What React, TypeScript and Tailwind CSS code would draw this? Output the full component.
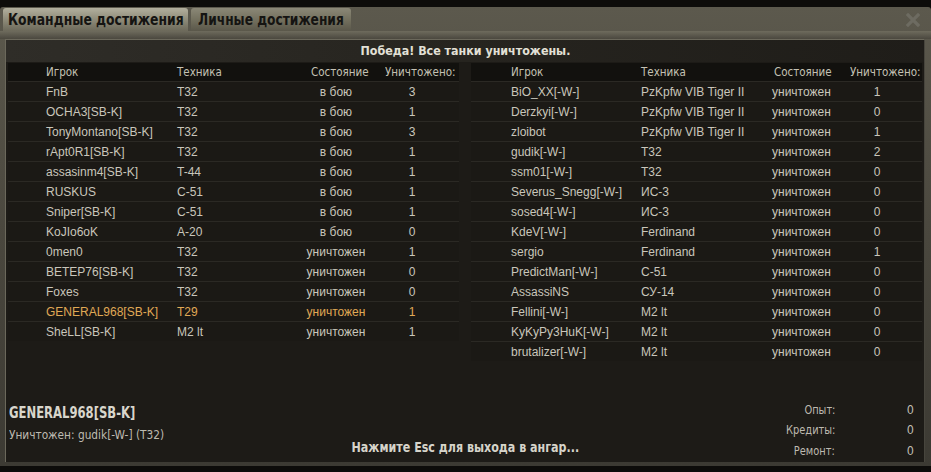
import React from 'react';

type Row = { name: string; tank: string; state: string; kills: string; me?: boolean };

const team: Row[] = [
  { name: 'FnB', tank: 'T32', state: 'в бою', kills: '3' },
  { name: 'OCHA3[SB-K]', tank: 'T32', state: 'в бою', kills: '1' },
  { name: 'TonyMontano[SB-K]', tank: 'T32', state: 'в бою', kills: '3' },
  { name: 'rApt0R1[SB-K]', tank: 'T32', state: 'в бою', kills: '1' },
  { name: 'assasinm4[SB-K]', tank: 'T-44', state: 'в бою', kills: '1' },
  { name: 'RUSKUS', tank: 'C-51', state: 'в бою', kills: '1' },
  { name: 'Sniper[SB-K]', tank: 'C-51', state: 'в бою', kills: '1' },
  { name: 'KoJIo6oK', tank: 'A-20', state: 'в бою', kills: '0' },
  { name: '0men0', tank: 'T32', state: 'уничтожен', kills: '1' },
  { name: 'BETEP76[SB-K]', tank: 'T32', state: 'уничтожен', kills: '0' },
  { name: 'Foxes', tank: 'T32', state: 'уничтожен', kills: '0' },
  { name: 'GENERAL968[SB-K]', tank: 'T29', state: 'уничтожен', kills: '1', me: true },
  { name: 'SheLL[SB-K]', tank: 'M2 lt', state: 'уничтожен', kills: '1' },
];

const enemy: Row[] = [
  { name: 'BiO_XX[-W-]', tank: 'PzKpfw VIB Tiger II', state: 'уничтожен', kills: '1' },
  { name: 'Derzkyi[-W-]', tank: 'PzKpfw VIB Tiger II', state: 'уничтожен', kills: '0' },
  { name: 'zloibot', tank: 'PzKpfw VIB Tiger II', state: 'уничтожен', kills: '1' },
  { name: 'gudik[-W-]', tank: 'T32', state: 'уничтожен', kills: '2' },
  { name: 'ssm01[-W-]', tank: 'T32', state: 'уничтожен', kills: '0' },
  { name: 'Severus_Snegg[-W-]', tank: 'ИС-3', state: 'уничтожен', kills: '0' },
  { name: 'sosed4[-W-]', tank: 'ИС-3', state: 'уничтожен', kills: '0' },
  { name: 'KdeV[-W-]', tank: 'Ferdinand', state: 'уничтожен', kills: '0' },
  { name: 'sergio', tank: 'Ferdinand', state: 'уничтожен', kills: '1' },
  { name: 'PredictMan[-W-]', tank: 'C-51', state: 'уничтожен', kills: '0' },
  { name: 'AssassiNS', tank: 'СУ-14', state: 'уничтожен', kills: '0' },
  { name: 'Fellini[-W-]', tank: 'M2 lt', state: 'уничтожен', kills: '0' },
  { name: 'KyKyPy3HuK[-W-]', tank: 'M2 lt', state: 'уничтожен', kills: '0' },
  { name: 'brutalizer[-W-]', tank: 'M2 lt', state: 'уничтожен', kills: '0' },
];

const narrow = "font-['DejaVu_Sans_Condensed','Liberation_Sans',sans-serif]";
const squeeze = 'inline-block whitespace-nowrap origin-left scale-x-[0.92]';

function TeamTable({ rows, left }: { rows: Row[]; left: boolean }) {
  // колонки немного отличаются у левой и правой таблицы
  const cols = left
    ? 'grid-cols-[38px_131px_124px_70px_82px]'
    : 'grid-cols-[40px_130px_131px_78px_71px]';

  return (
    <div className="w-[451px]">
      <div className={`grid ${cols} h-[18px] items-center bg-[#12110e] text-[12.5px] text-[#c4c1b4] ${narrow}`}>
        <div />
        <div><span className={squeeze}>Игрок</span></div>
        <div><span className={squeeze}>Техника</span></div>
        <div className={left ? 'pl-[10px]' : 'pl-[2px]'}><span className={squeeze}>Состояние</span></div>
        <div className={left ? 'pl-[14px]' : ''}><span className={squeeze}>Уничтожено:</span></div>
      </div>
      {rows.map((r) => (
        <div
          key={r.name}
          className={`grid ${cols} h-[20px] items-center border-t border-[#2b2924] bg-[#1b1915] text-[12px] ${
            r.me ? 'text-[#e0a955]' : 'text-[#c9c6bb]'
          }`}
        >
          <div />
          <div className="whitespace-nowrap">{r.name}</div>
          <div className="whitespace-nowrap">{r.tank}</div>
          <div className={left ? 'text-center' : 'text-left'}>{r.state}</div>
          <div className={left ? 'text-center' : 'w-[54px] text-center'}>{r.kills}</div>
        </div>
      ))}
    </div>
  );
}

export default function App() {
  return (
    <div className="w-[931px] h-[472px] overflow-hidden bg-[#0d0c0a] pt-[7px] font-['Liberation_Sans',Arial,sans-serif]">
      <div className="h-[459px] flex flex-col rounded-t-[3px] bg-gradient-to-b from-[#5c594d] via-[#4a473e] to-[#3c3a33] pl-[5px] pr-[6px] pb-[4px]">
        {/* вкладки */}
        <div className="h-[23px] mt-[1px] flex items-stretch -ml-[2px]">
          <div className={`w-[185px] rounded-t-[3px] bg-gradient-to-b from-[#b3b09e] via-[#8f8c7a] to-[#6c695a] flex items-center pl-[5px] text-[16px] font-bold text-[#151412] ${narrow}`}>
            <span className="inline-block whitespace-nowrap origin-left scale-x-[0.86]">Командные достижения</span>
          </div>
          <div className={`ml-[3px] w-[160px] rounded-t-[3px] bg-gradient-to-b from-[#8b8877] via-[#74715f] to-[#5a574a] flex items-center pl-[7px] text-[16px] font-bold text-[#151412] ${narrow}`}>
            <span className="inline-block whitespace-nowrap origin-left scale-x-[0.85]">Личные достижения</span>
          </div>
          <div className="flex-1" />
          <svg className="mt-[5px] mr-[4px]" width="16" height="14" viewBox="0 0 16 14">
            <path d="M3 2 L13 12 M13 2 L3 12" stroke="#6d6b61" strokeWidth="3.2" strokeLinecap="square" />
          </svg>
        </div>
        <div className="h-[8px] bg-gradient-to-b from-[#6e6b5d] to-[#4b483f] -ml-[5px] -mr-[6px]" />

        {/* основная панель */}
        <div className="flex-1 flex flex-col border-t border-l border-[#6b685b] border-r border-r-[#47453d] bg-[#1d1b17]">
          <div className={`h-[22px] flex items-center justify-center bg-gradient-to-r from-[#2f2d28] via-[#26241f] to-[#1f1d19] text-[13px] font-bold text-[#e2e0d6] ${narrow}`}>
            <span className="inline-block whitespace-nowrap scale-x-[0.95]">Победа! Все танки уничтожены.</span>
          </div>
          <div className="mt-[1px] pl-[2px] flex gap-[12px]">
            <TeamTable rows={team} left />
            <TeamTable rows={enemy} left={false} />
          </div>

          <div className="flex-1" />

          <div className="flex items-end">
            <div className={`pl-[3px] pb-[17px] w-[300px] ${narrow}`}>
              <div className="leading-[20px] text-[15px] font-bold text-[#d8d6cc]">
                <span className="inline-block whitespace-nowrap origin-left scale-x-[0.86]">GENERAL968[SB-K]</span>
              </div>
              <div className="mt-[2px] leading-[20px] text-[12.5px] text-[#bdbab0]">
                <span className="inline-block whitespace-nowrap origin-left scale-x-[0.94]">Уничтожен: gudik[-W-] (T32)</span>
              </div>
            </div>
            <div className={`flex-1 text-center pb-[5px] leading-[20px] text-[13.5px] font-bold text-[#d6d4ca] ${narrow}`}>
              <span className="inline-block whitespace-nowrap scale-x-[0.915]">Нажмите Esc для выхода в ангар...</span>
            </div>
            <div className={`w-[300px] pr-[10px] pb-[1px] grid grid-cols-[1fr_79px] leading-[20.5px] text-[12.5px] text-[#bdbab0] ${narrow}`}>
              <div className="text-right"><span className="inline-block origin-right scale-x-[0.875]">Опыт:</span></div>
              <div className="text-right">0</div>
              <div className="text-right"><span className="inline-block origin-right scale-x-[0.875]">Кредиты:</span></div>
              <div className="text-right">0</div>
              <div className="text-right"><span className="inline-block origin-right scale-x-[0.875]">Ремонт:</span></div>
              <div className="text-right">0</div>
            </div>
          </div>
        </div>
      </div>
    </div>
  );
}
